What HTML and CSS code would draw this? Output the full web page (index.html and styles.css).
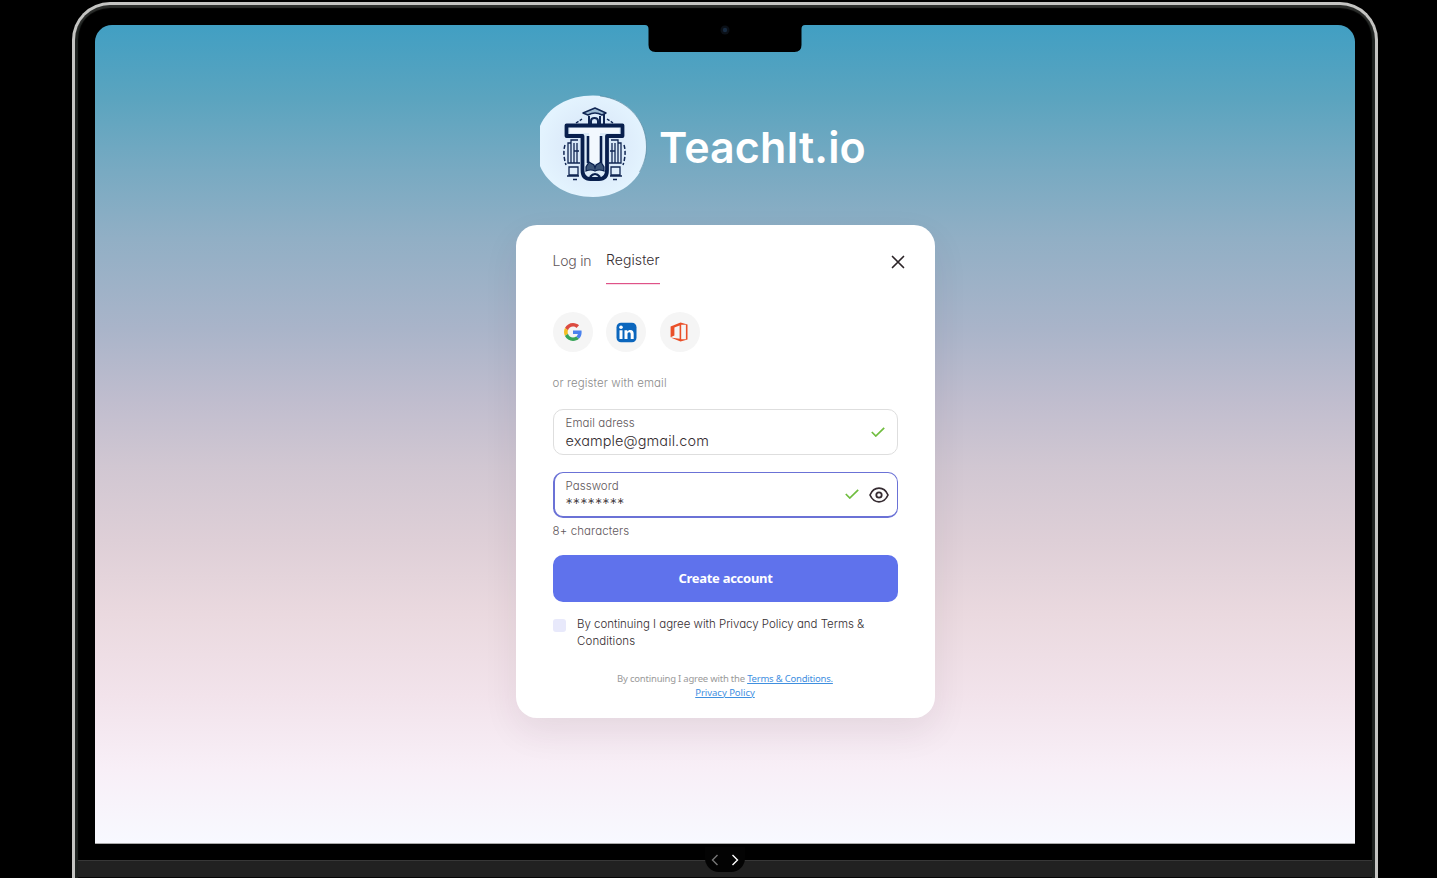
FILE: index.html
```
<!DOCTYPE html>
<html lang="en">
<head>
<meta charset="utf-8">
<title>TeachIt.io</title>
<link rel="stylesheet" href="styles.css">
</head>
<body>
<div class="laptop">
  <main class="screen">
    <svg class="notch" width="160" height="27" viewBox="0 0 160 27"><path d="M0 0h160q-3.500 0-3.500 4v16q0 7-7 7h-139q-7 0-7-7V4Q3.500 0 0 0z" fill="#000"/><circle cx="80" cy="5" r="4.500" fill="#0b1017"/><circle cx="80" cy="5" r="2.200" fill="#172a40"/></svg>
    <header class="brand">
      <svg class="brand-mark" width="107" height="103" viewBox="0 0 107 103">
        <defs><radialGradient id="disc"><stop offset="0" stop-color="#d3e4f6"/><stop offset=".65" stop-color="#deedfb"/><stop offset="1" stop-color="#e3f3fe"/></radialGradient></defs>
        <path d="M0 31C8 12 28 .5 53 .5c30 0 53.500 21 53.500 51S83 102 53 102C28 102 8 90 0 71z" fill="url(#disc)"/>
        <path d="M60 1C86 4 106.500 24 106.500 52c0 9-3 18-7 25" fill="none" stroke="#477b93" stroke-width=".6"/>
        <g fill="none" stroke="#102653" stroke-width="1.300">
          <path d="M38 45h-7v3h-3v20h12M31 48v20M34 48v20M37 48v20M34 56h5M29 72h9v8h-9zM27 81h12M71 45h7v3h3v20H69M78 48v20M75 48v20M72 48v20M75 56h-5M71 72h9v8h-9zM70 81h12"/>
          <path d="M25 50c-2 6-1 14 1 20M84 50c2 6 1 14-1 20" stroke-width="1.500" stroke-dasharray="4 2"/>
          <path d="M36 28l6-4M67 24l6 4" stroke-width="1.500" stroke-dasharray="3 1.500"/>
          <path d="M33 84.500h4M73 84.500h4"/>
          <path d="M49 21v9M60 21v9M51 29v-3c0-4 7-4 7 0v3M64 17v12" stroke-width="2"/>
        </g>
        <path d="M43 18l12-5 11 5-4 2q-7-4-14 0z" fill="#9ebbd3" stroke="#102653" stroke-width="1.500" stroke-linejoin="round"/>
        <path d="M26.500 30.500h56v10.500H67v34q0 9-8 9H50.500q-8 0-8-9V41H26.500z" fill="#dcebf8" stroke="#081f4d" stroke-width="3.800" stroke-linejoin="round"/>
        <path d="M30 33h49v5H60v30H49V38H30z" fill="#f2f8fe"/>
        <path d="M48 41v27M61 41v27" stroke="#081f4d" stroke-width="2.600"/>
        <path d="M46 76v-4l3-5 5 3 1 3 1-3 5-3 3 5v4q-5-2-9 0-4-2-9 0z" fill="#3c5578" stroke="#081f4d" stroke-width="1.200"/>
        <path d="M50 82q5-6 10 0" fill="none" stroke="#081f4d" stroke-width="2.200"/>
      </svg>
      <span class="brand-name">TeachIt.io</span>
    </header>

    <section class="card">
      <div class="card-head">
        <nav class="tabs"><a class="tab login">Log in</a><a class="tab active">Register</a></nav>
        <svg class="close" width="14" height="14" viewBox="0 0 14 14"><path d="M1.500 1.500l11 11M12.500 1.500l-11 11" stroke="#2b2427" stroke-width="1.700" stroke-linecap="round"/></svg>
      </div>
      <div class="socials">
        <a class="social"><svg width="18" height="18" viewBox="0 0 48 48"><path fill="#dc4b40" d="M24 9.500c3.540 0 6.710 1.220 9.210 3.600l6.850-6.850C35.900 2.380 30.470 0 24 0 14.620 0 6.510 5.380 2.560 13.220l7.980 6.190C12.430 13.720 17.740 9.500 24 9.500z"/><path fill="#4a82ee" d="M46.980 24.550c0-1.570-.15-3.090-.38-4.550H24v9.020h12.940c-.58 2.960-2.260 5.480-4.780 7.180l7.730 6c4.510-4.180 7.090-10.360 7.090-17.650z"/><path fill="#f3bd20" d="M10.530 28.590A14.500 14.500 0 0 1 10.530 19.410l-7.980-6.190A24 24 0 0 0 0 24c0 3.880.92 7.540 2.560 10.780z"/><path fill="#36a458" d="M24 48c6.480 0 11.930-2.130 15.890-5.810l-7.730-6c-2.150 1.450-4.920 2.300-8.160 2.300-6.260 0-11.570-4.220-13.470-9.910l-7.980 6.190C6.510 42.620 14.620 48 24 48z"/></svg></a>
        <a class="social"><svg width="21" height="21" viewBox="0 0 21 21"><rect x=".5" y=".8" width="20" height="19.500" rx="4.500" fill="#0b66bd"/><circle cx="5" cy="5.300" r="1.800" fill="#fff"/><path fill="#fff" d="M3.500 8.200h3v8.800h-3zM8.500 8.200h2.800v1.300c.6-1 1.600-1.600 2.900-1.600 2.500 0 3.500 1.500 3.500 4.100v5h-3v-4.600c0-1.300-.4-2.100-1.500-2.100-1.200 0-1.700.8-1.700 2.100v4.600h-3z"/></svg></a>
        <a class="social"><svg class="office" width="18" height="20" viewBox="0 0 18 20"><path fill="#ea4f28" fill-rule="evenodd" d="M.6 4.600L10.500.5 17.500 2.500v15L10.500 19.600.6 15.500l9 1.300V3.500L4.400 5.500v8L.6 15.200zM11.200 2.800v14.400h4.700V2.800z"/></svg></a>
      </div>
      <p class="hint"><span class="or">or register with email</span></p>
      <div class="field">
        <div class="field-text"><span class="label">Email adress</span><span class="value">example@gmail.com</span></div>
        <svg class="check" width="14" height="10" viewBox="0 0 14 10"><path d="M.8 5l4 4L13.200.8" fill="none" stroke="#6fbd3e" stroke-width="1.700"/></svg>
      </div>
      <div class="field focused">
        <div class="field-text"><span class="label">Password</span><span class="value">********</span></div>
        <svg class="check" width="14" height="10" viewBox="0 0 14 10"><path d="M.8 5l4 4L13.200.8" fill="none" stroke="#6fbd3e" stroke-width="1.700"/></svg>
        <svg class="eye" width="20" height="16" viewBox="0 0 20 16"><path d="M1 8C3 3.500 6.200 1.200 10 1.200S17 3.500 19 8c-2 4.500-5.200 6.800-9 6.800S3 12.500 1 8z" fill="none" stroke="#352b31" stroke-width="1.700" stroke-linejoin="round"/><circle cx="10" cy="8" r="2.700" fill="none" stroke="#352b31" stroke-width="1.800"/></svg>
      </div>
      <p class="rule"><span class="rule-text">8+ characters</span></p>
      <button class="create"><span class="create-text">Create account</span></button>
      <div class="consent"><span class="box"></span><div class="consent-text"><span class="agree">By continuing I agree with Privacy Policy and Terms &amp;</span><br><span class="conditions">Conditions</span></div></div>
      <div class="legal"><span class="legal-copy">By continuing I agree with the </span><a class="terms">Terms &amp; Conditions.</a><br><a class="privacy">Privacy Policy</a></div>
    </section>
  </main>
  <footer class="chin"></footer>
  <nav class="pager"><svg width="28" height="12" viewBox="0 0 28 12" fill="none" stroke-width="1.400"><path d="M6.500 1L1.500 6l5 5" stroke="#777"/><path d="M21.500 1l5 5-5 5" stroke="#fff"/></svg></nav>
</div>
</body>
</html>
```
FILE: styles.css
```
* { box-sizing: border-box; }
html, body { height: 100%; }
body { margin: 0; background: #000; overflow: hidden; padding: 2px 59px 0 72px; font-family: Inter, sans-serif; font-feature-settings: "cv11"; }
p { margin: 0; }
span, a { white-space: nowrap; }
.laptop { position: relative; width: 1306px; height: 876px; border: 3px solid #c4c4c2; border-bottom: 0; border-radius: 38px 38px 0 0; box-shadow: inset 0 3px 1px #2b2d2b, inset 3px 0 1px #202422, inset -3px 0 1px #202422; padding: 20px 20px 0; overflow: hidden; }
.screen { height: 819px; width: 1260px; border-radius: 17px 17px 0 0; background: linear-gradient(#419fc3 0, #5ba4bf 9%, #79aac2 18%, #91afc5 26%, #a9b4c9 37%, #c0bdce 46%, #d1c7d2 54%, #decfd7 63%, #ead9df 72%, #f2e3eb 82%, #f8eff7 91%, #f8f9ff 100%); display: flex; flex-direction: column; align-items: center; border-bottom: 1px solid #aaa; }
.notch { flex: none; display: block; }
.brand { width: 370px; height: 103px; margin: 43px 0 0; display: flex; align-items: center; gap: 12px; }
.brand-mark { flex: none; }
.brand-name { color: #fff; font-size: 43px; font-weight: 600; line-height: 50px; letter-spacing: .1px; font-feature-settings: normal; }
.card { width: 419px; height: 493px; margin-top: 27px; background: #fff; border-radius: 21px; padding: 23px 37px 0; box-shadow: 0 14px 35px rgba(60, 40, 65, .08); color: #352d31; }
.card-head { display: flex; justify-content: space-between; height: 36px; }
.tabs { display: flex; gap: 15px; }
.tab { font-size: 14px; line-height: 24px; height: 36px; }
.login { padding-top: 1px; width: 38.500px; color: #5f565a; font-weight: 300; letter-spacing: -.2px; }
.active { width: 54px; font-weight: 350; letter-spacing: .08px; border-bottom: 1px solid #df5288; box-shadow: 0 1px 0 rgba(223, 82, 136, .2); }
.close { margin: 7px -7px 0 0; }
.socials { display: flex; gap: 13.600px; margin-top: 28px; }
.social { width: 40px; height: 40px; border-radius: 50%; background: #f5f5f5; display: flex; align-items: center; justify-content: center; }
.office { margin-right: 2px; }
.hint { margin-top: 21px; height: 20px; line-height: 20px; font-size: 11.500px; color: #8c8c8c; font-weight: 300; letter-spacing: .09px; }
.field { width: 345px; height: 46px; margin-top: 16px; border: 1px solid #dedede; border-radius: 10px; padding: 0 12px; display: flex; align-items: center; }
.focused { margin-top: 17px; border: 1px solid #6b72d6; border-left-width: 2px; border-bottom-width: 2px; padding: 0 8px 0 11px; }
.field-text { flex: 1; display: flex; flex-direction: column; padding-bottom: 1px; }
.focused .field-text { padding: 1px 0 0; }
.label { font-size: 11.500px; line-height: 18px; color: #5f575b; font-weight: 300; letter-spacing: .05px; }
.value { font-size: 14.500px; line-height: 18px; font-weight: 350; letter-spacing: .1px; }
.check { margin-bottom: 1px; }
.eye { margin-left: 10px; }
.rule { height: 20px; line-height: 20px; margin-top: 3px; font-size: 11.500px; color: #5f575b; font-weight: 300; letter-spacing: .12px; }
.create { display: block; width: 345px; height: 47px; margin-top: 14px; padding: 0 0 1px; background: #5f72ec; color: #fff; border: 0; border-radius: 10px; font: 700 13px/20px "Noto Sans", sans-serif; letter-spacing: -.28px; }
.create-text { padding-left: 1px; }
.consent { display: flex; gap: 11px; margin-top: 14px; }
.box { flex: none; width: 13px; height: 13px; margin-top: 3px; border-radius: 3px; background: #e8e9fb; }
.consent-text { font-size: 11.500px; line-height: 16.500px; font-weight: 350; letter-spacing: -.02px; padding-left: .5px; }
.conditions { letter-spacing: .1px; }
.legal { margin-top: 23px; text-align: center; font: 9.500px/13.500px "Noto Sans", sans-serif; color: #999; letter-spacing: -.21px; }
.terms, .privacy { color: #3f8fdf; text-decoration: underline; }
.privacy { letter-spacing: -.03px; }
.chin { height: 17px; margin: 16px -17px 0; border-top: 1px solid #373737; background: #212121; }
.pager { position: absolute; left: 630px; top: 842px; width: 40px; height: 25px; border-radius: 0 0 14px 14px; background: #030303; display: flex; justify-content: center; align-items: center; }
```
